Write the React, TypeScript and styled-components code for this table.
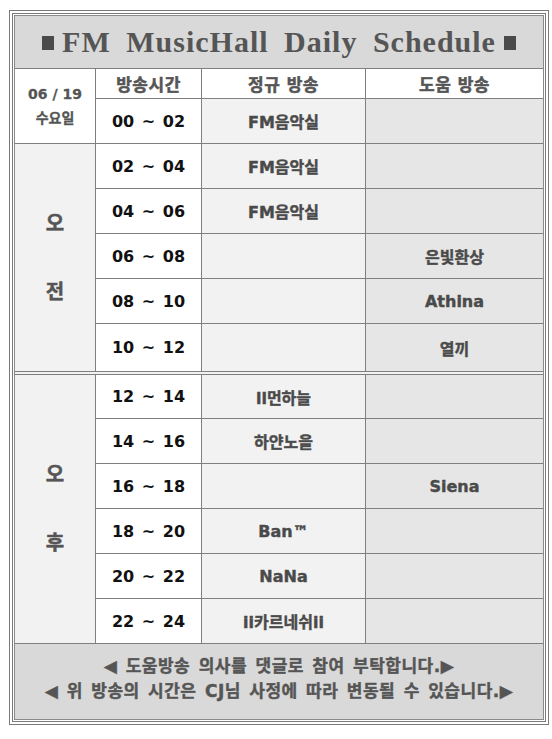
import styled, { createGlobalStyle } from "styled-components";

const GlobalStyle = createGlobalStyle`
  body {
    margin: 0;
    background: #ffffff;
    font-family: "Noto Sans CJK KR", "DejaVu Sans", sans-serif;
  }
`;

const KR = `"DejaVu Sans", "Noto Sans CJK KR", sans-serif`;

const Frame = styled.div`
  margin: 10px 0 0 9px;
  width: 540px;
  box-sizing: border-box;
  border: 4px double #7a7a7a;
  padding: 1px;
`;

const Inner = styled.div`
  border: 1px solid #8a8a8a;
  background: #d9d9d9;
`;

const TitleBar = styled.div`
  height: 52px;
  display: flex;
  align-items: center;
  justify-content: center;
  gap: 8px;
  font-family: "Liberation Serif", serif;
  font-weight: 700;
  font-size: 30px;
  letter-spacing: 1px;
  word-spacing: 7px;
  color: #555555;
`;

const Square = styled.span`
  display: inline-block;
  width: 12px;
  height: 14px;
  background: #4a4a4a;
  margin-top: 2px;
`;

const Grid = styled.div`
  display: grid;
  grid-template-columns: 80px 105px 163px 177px;
  grid-template-rows: 29px repeat(5, 44px) 47px 2px 43px repeat(5, 44px);
  gap: 1px;
  background: #7f7f7f;
  border-top: 1px solid #7f7f7f;
  border-bottom: 1px solid #7f7f7f;
`;

type Tone = "white" | "light" | "mid";

const tones: Record<Tone, string> = {
  white: "#ffffff",
  light: "#f2f2f2",
  mid: "#e6e6e6",
};

const Cell = styled.div<{ $tone: Tone; $span?: number }>`
  background: ${(p) => tones[p.$tone]};
  grid-row: ${(p) => (p.$span ? `span ${p.$span}` : "auto")};
  display: flex;
  flex-direction: column;
  align-items: center;
  justify-content: center;
  text-align: center;
`;

const Head = styled(Cell)`
  font-family: ${KR};
  font-weight: 700;
  font-size: 17px;
  letter-spacing: 0.5px;
  color: #555555;
  -webkit-text-stroke: 0.5px #555555;
`;

const DateCell = styled(Cell)`
  font-family: ${KR};
  font-weight: 700;
  font-size: 14px;
  line-height: 24px;
  color: #555555;
  -webkit-text-stroke: 0.3px #555555;
`;

const HalfLabel = styled(Cell)`
  font-family: ${KR};
  font-weight: 700;
  font-size: 20px;
  line-height: 34px;
  color: #555555;
  -webkit-text-stroke: 0.5px #555555;
`;

const Time = styled(Cell)`
  font-family: "DejaVu Sans", sans-serif;
  font-weight: 700;
  font-size: 16px;
  word-spacing: 2px;
  color: #111111;
  white-space: pre;
`;

const Name = styled(Cell)`
  font-family: ${KR};
  font-weight: 700;
  font-size: 16px;
  color: #4a4a4a;
  -webkit-text-stroke: 0.4px #4a4a4a;
`;

const Divider = styled.div`
  grid-column: 1 / -1;
  background: #f2f2f2;
`;

const Footer = styled.div`
  height: 75px;
  display: flex;
  flex-direction: column;
  align-items: center;
  justify-content: center;
  padding-bottom: 6px;
  box-sizing: border-box;
  font-family: ${KR};
  font-weight: 700;
  font-size: 17px;
  line-height: 25px;
  letter-spacing: 0.5px;
  word-spacing: 2px;
  color: #555555;
  -webkit-text-stroke: 0.4px #555555;
`;

type Slot = { time: string; regular: string; helper: string };

const am: Slot[] = [
  { time: "02 ~ 04", regular: "FM음악실", helper: "" },
  { time: "04 ~ 06", regular: "FM음악실", helper: "" },
  { time: "06 ~ 08", regular: "", helper: "은빛환상" },
  { time: "08 ~ 10", regular: "", helper: "Athina" },
  { time: "10 ~ 12", regular: "", helper: "열끼" },
];

const pm: Slot[] = [
  { time: "12 ~ 14", regular: "ll먼하늘", helper: "" },
  { time: "14 ~ 16", regular: "하얀노을", helper: "" },
  { time: "16 ~ 18", regular: "", helper: "Siena" },
  { time: "18 ~ 20", regular: "Ban™", helper: "" },
  { time: "20 ~ 22", regular: "NaNa", helper: "" },
  { time: "22 ~ 24", regular: "ii카르네쉬ii", helper: "" },
];

const SlotRow = ({ slot }: { slot: Slot }) => (
  <>
    <Time $tone="white">{slot.time}</Time>
    <Name $tone="light">{slot.regular}</Name>
    <Name $tone="mid">{slot.helper}</Name>
  </>
);

export default function App() {
  return (
    <>
      <GlobalStyle />
      <Frame>
        <Inner>
          <TitleBar>
            <Square />
            <span>FM MusicHall Daily Schedule</span>
            <Square />
          </TitleBar>
          <Grid>
            <DateCell $tone="white" $span={2}>
              <span>06 / 19</span>
              <span>수요일</span>
            </DateCell>
            <Head $tone="white">방송시간</Head>
            <Head $tone="white">정규 방송</Head>
            <Head $tone="white">도움 방송</Head>
            <SlotRow slot={{ time: "00 ~ 02", regular: "FM음악실", helper: "" }} />

            <HalfLabel $tone="light" $span={5}>
              <span>오</span>
              <span>&nbsp;</span>
              <span>전</span>
            </HalfLabel>
            {am.map((s) => (
              <SlotRow key={s.time} slot={s} />
            ))}

            <Divider />

            <HalfLabel $tone="light" $span={6}>
              <span>오</span>
              <span>&nbsp;</span>
              <span>후</span>
            </HalfLabel>
            {pm.map((s) => (
              <SlotRow key={s.time} slot={s} />
            ))}
          </Grid>
          <Footer>
            <span>◀ 도움방송 의사를 댓글로 참여 부탁합니다.▶</span>
            <span>◀ 위 방송의 시간은 CJ님 사정에 따라 변동될 수 있습니다.▶</span>
          </Footer>
        </Inner>
      </Frame>
    </>
  );
}
